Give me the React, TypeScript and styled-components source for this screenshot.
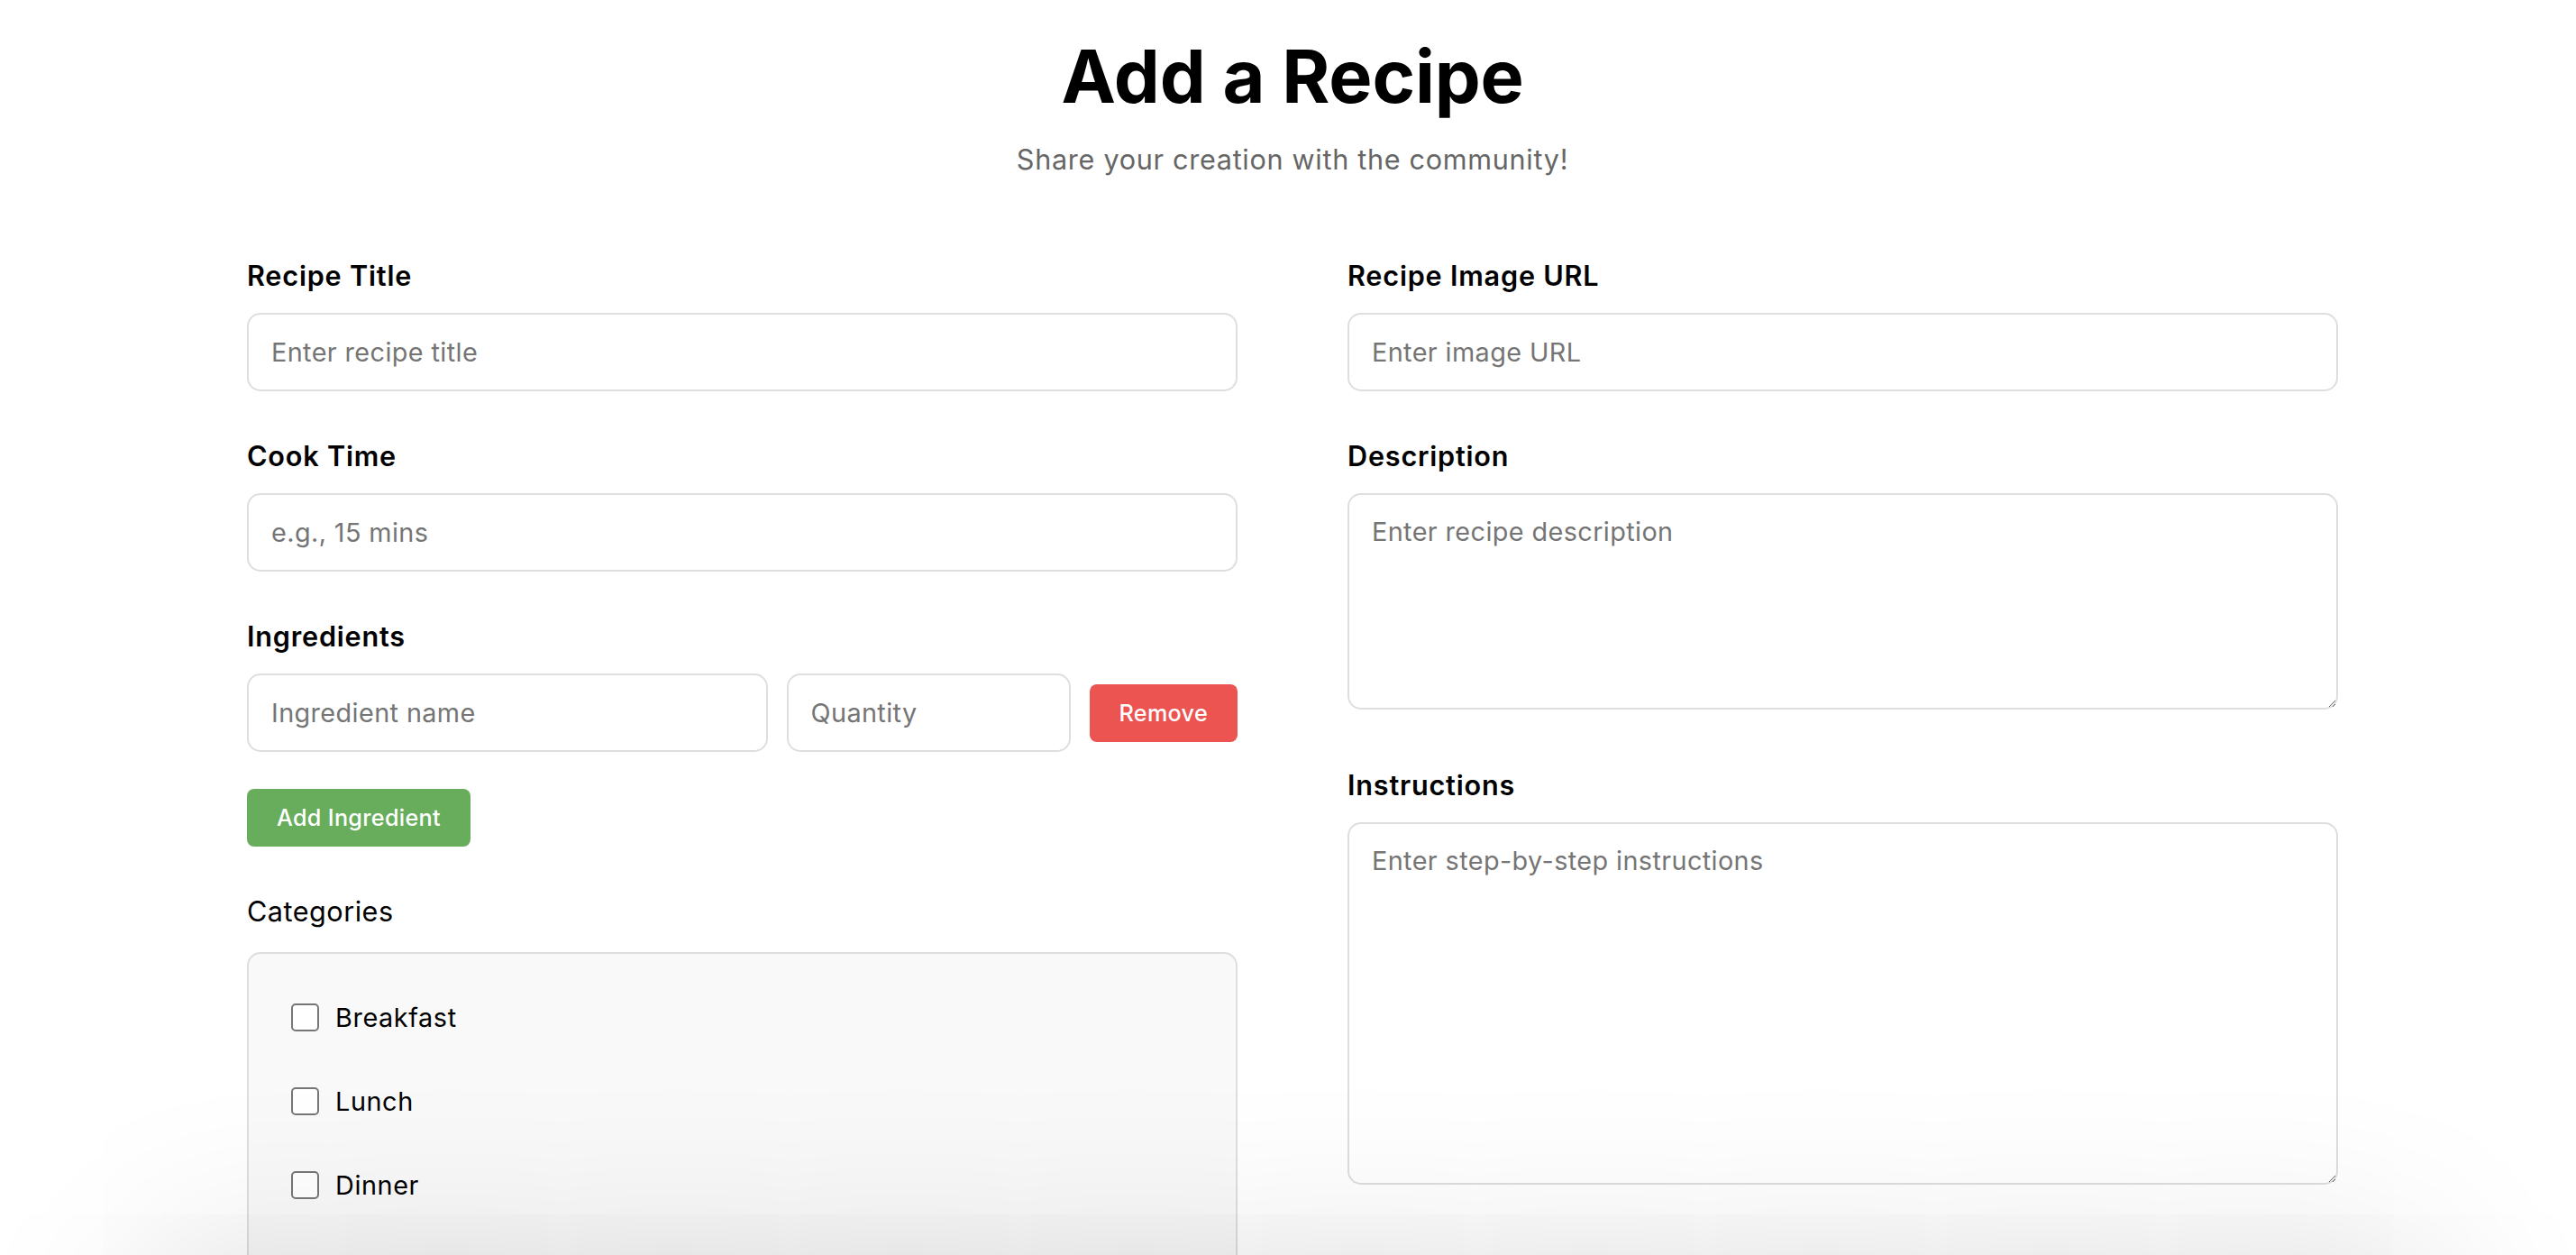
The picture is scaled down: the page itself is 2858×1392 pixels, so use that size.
import React from "react";
import styled, { createGlobalStyle } from "styled-components";

const GlobalStyle = createGlobalStyle`
  html, body {
    margin: 0;
    padding: 0;
    background: #ffffff;
  }
  body {
    font-family: Inter, "Noto Sans", "Liberation Sans", sans-serif;
    color: #000;
  }
  *, *::before, *::after {
    box-sizing: border-box;
  }
`;

const Page = styled.div`
  padding: 36px 0 120px 10px;
`;

const Header = styled.header`
  text-align: center;
`;

const Title = styled.h1`
  margin: 0;
  font-size: 81px;
  line-height: 98px;
  font-weight: 700;
  letter-spacing: -0.2px;
  color: #000;
`;

const Subtitle = styled.p`
  margin: 24px 0 0;
  font-size: 30.6px;
  line-height: 37px;
  letter-spacing: 0.7px;
  color: #666;
`;

const FormGrid = styled.form`
  width: 2320px;
  margin: 92px auto 0;
  display: grid;
  grid-template-columns: 1fr 1fr;
  column-gap: 122px;
  align-items: start;
`;

const Column = styled.div`
  display: flex;
  flex-direction: column;
  gap: 53px;
`;

const Field = styled.div`
  display: flex;
  flex-direction: column;
`;

const Label = styled.label<{ $plain?: boolean }>`
  display: block;
  font-size: 30.6px;
  line-height: 37px;
  letter-spacing: ${(p) => (p.$plain ? "0.5px" : "0.8px")};
  font-weight: ${(p) => (p.$plain ? 400 : 600)};
  margin-bottom: ${(p) => (p.$plain ? "27px" : "23px")};
  color: #000;
`;

const fieldBase = `
  width: 100%;
  border: 2px solid #dedede;
  border-radius: 15px;
  background: #fff;
  font-family: Inter, "Noto Sans", "Liberation Sans", sans-serif;
  font-size: 28.8px;
  letter-spacing: 0.4px;
  color: #000;
  outline: none;
  &::placeholder {
    color: #757575;
  }
`;

const TextInput = styled.input`
  ${fieldBase}
  height: 87px;
  padding: 0 25px;
`;

const QuantityInput = styled(TextInput)`
  width: 315px;
  flex: none;
`;

const TextArea = styled.textarea<{ $h: number }>`
  ${fieldBase}
  display: block;
  height: ${(p) => p.$h}px;
  padding: 23px 25px;
  line-height: normal;
  margin-bottom: 12px;
`;

const IngredientRow = styled.div`
  display: flex;
  align-items: center;
  gap: 21px;
`;

const Button = styled.button<{ $variant: "danger" | "success" }>`
  flex: none;
  height: 64px;
  padding: 0 33px;
  border: none;
  border-radius: 8px;
  background: ${(p) => (p.$variant === "danger" ? "#eb5450" : "#68ad5c")};
  color: #fff;
  font-family: Inter, "Noto Sans", "Liberation Sans", sans-serif;
  font-size: 25.2px;
  letter-spacing: 0.3px;
  font-weight: 500;
  cursor: pointer;
`;

const AddButton = styled(Button)`
  align-self: flex-start;
  margin-top: 41px;
`;

const CategoryBox = styled.div`
  border: 2px solid #dedede;
  border-radius: 15px;
  background: #f9f9f9;
  padding: 53px 47px;
  display: flex;
  flex-direction: column;
  gap: 58px;
`;

const CheckItem = styled.label`
  display: flex;
  align-items: center;
  gap: 18px;
  font-size: 28.8px;
  line-height: 35px;
  letter-spacing: 0.6px;
  font-weight: 400;
  color: #000;
`;

const CheckBox = styled.input`
  appearance: none;
  -webkit-appearance: none;
  margin: 0;
  width: 31px;
  height: 31px;
  border: 2px solid #767676;
  border-radius: 5px;
  background: #fff;
  flex: none;
`;

const BottomShade = styled.div`
  position: fixed;
  left: 160px;
  right: 160px;
  bottom: -200px;
  height: 200px;
  box-shadow: 0 0 200px rgba(0, 0, 0, 0.14);
  pointer-events: none;
`;

const categories = ["Breakfast", "Lunch", "Dinner", "Dessert", "Snacks", "Vegetarian"];

export default function App() {
  return (
    <>
      <GlobalStyle />
      <Page>
        <Header>
          <Title>Add a Recipe</Title>
          <Subtitle>Share your creation with the community!</Subtitle>
        </Header>
        <FormGrid onSubmit={(e) => e.preventDefault()}>
          <Column>
            <Field>
              <Label>Recipe Title</Label>
              <TextInput placeholder="Enter recipe title" />
            </Field>
            <Field>
              <Label>Cook Time</Label>
              <TextInput placeholder="e.g., 15 mins" />
            </Field>
            <Field>
              <Label>Ingredients</Label>
              <IngredientRow>
                <TextInput placeholder="Ingredient name" />
                <QuantityInput placeholder="Quantity" />
                <Button type="button" $variant="danger">
                  Remove
                </Button>
              </IngredientRow>
              <AddButton type="button" $variant="success">
                Add Ingredient
              </AddButton>
            </Field>
            <Field>
              <Label $plain>Categories</Label>
              <CategoryBox>
                {categories.map((c) => (
                  <CheckItem key={c}>
                    <CheckBox type="checkbox" />
                    {c}
                  </CheckItem>
                ))}
              </CategoryBox>
            </Field>
          </Column>
          <Column>
            <Field>
              <Label>Recipe Image URL</Label>
              <TextInput placeholder="Enter image URL" />
            </Field>
            <Field>
              <Label>Description</Label>
              <TextArea $h={240} placeholder="Enter recipe description" />
            </Field>
            <Field>
              <Label>Instructions</Label>
              <TextArea $h={402} placeholder="Enter step-by-step instructions" />
            </Field>
          </Column>
        </FormGrid>
      </Page>
      <BottomShade />
    </>
  );
}
